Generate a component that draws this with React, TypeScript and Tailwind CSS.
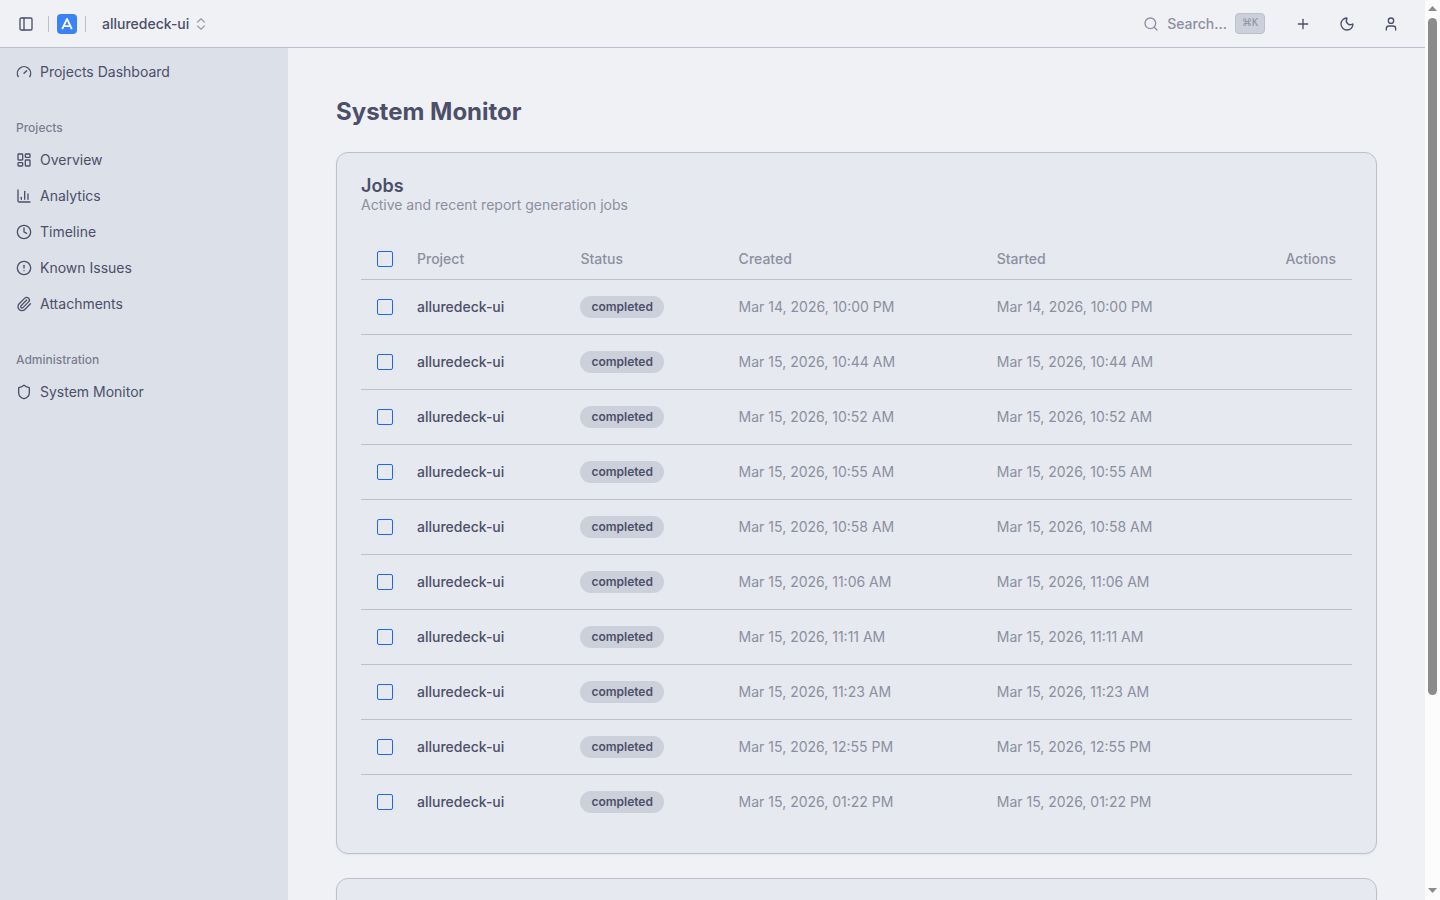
import {
  ChartColumn,
  ChevronsUpDown,
  CircleAlert,
  Clock,
  Gauge,
  LayoutDashboard,
  Moon,
  PanelLeft,
  Paperclip,
  Plus,
  Search,
  Shield,
  User,
  type LucideIcon,
} from "lucide-react";

type NavItem = { label: string; icon: LucideIcon };

const projectItems: NavItem[] = [
  { label: "Overview", icon: LayoutDashboard },
  { label: "Analytics", icon: ChartColumn },
  { label: "Timeline", icon: Clock },
  { label: "Known Issues", icon: CircleAlert },
  { label: "Attachments", icon: Paperclip },
];

const adminItems: NavItem[] = [{ label: "System Monitor", icon: Shield }];

const jobs = [
  "Mar 14, 2026, 10:00 PM",
  "Mar 15, 2026, 10:44 AM",
  "Mar 15, 2026, 10:52 AM",
  "Mar 15, 2026, 10:55 AM",
  "Mar 15, 2026, 10:58 AM",
  "Mar 15, 2026, 11:06 AM",
  "Mar 15, 2026, 11:11 AM",
  "Mar 15, 2026, 11:23 AM",
  "Mar 15, 2026, 12:55 PM",
  "Mar 15, 2026, 01:22 PM",
].map((time, index) => ({
  id: index + 1,
  project: "alluredeck-ui",
  status: "completed",
  created: time,
  started: time,
}));

function Logo() {
  return (
    <svg viewBox="0 0 20 20" className="size-5" aria-hidden="true">
      <rect width="20" height="20" rx="4" fill="#3b82f6" />
      <path
        d="M5.2 15 10 4.9 14.8 15M7 12.1h6"
        fill="none"
        stroke="#fff"
        strokeWidth="1.8"
        strokeLinejoin="round"
      />
    </svg>
  );
}

function NavLink({ label, icon: Icon }: NavItem) {
  return (
    <a href="#" className="flex h-8 items-center gap-2 rounded-md px-2 text-sm hover:bg-[#ccd0da]">
      <Icon className="size-4 shrink-0" />
      <span>{label}</span>
    </a>
  );
}

function NavGroup({ title, items }: { title?: string; items: NavItem[] }) {
  return (
    <div className="p-2">
      {title && (
        <h2 className="flex h-8 items-center px-2 text-xs font-medium text-[#4c4f69]/70">{title}</h2>
      )}
      <ul className="flex flex-col gap-1">
        {items.map((item) => (
          <li key={item.label}>
            <NavLink {...item} />
          </li>
        ))}
      </ul>
    </div>
  );
}

function IconButton({ label, icon: Icon }: NavItem) {
  return (
    <button
      type="button"
      aria-label={label}
      className="flex size-9 items-center justify-center rounded-md hover:bg-[#ccd0da]"
    >
      <Icon className="size-4" />
    </button>
  );
}

function Checkbox({ label }: { label: string }) {
  return (
    <input
      type="checkbox"
      aria-label={label}
      className="block size-4 appearance-none rounded-[2px] border border-[#1e66f5] checked:bg-[#1e66f5]"
    />
  );
}

function Header() {
  return (
    <header className="sticky top-0 z-10 flex h-12 items-center justify-between border-b border-[#bcc0cc] bg-[#eff1f5] pr-4 pl-3">
      <div className="flex items-center gap-2">
        <button
          type="button"
          aria-label="Toggle sidebar"
          className="flex size-7 items-center justify-center rounded-md hover:bg-[#ccd0da]"
        >
          <PanelLeft className="size-4" />
        </button>
        <span className="h-4 w-px bg-[#bcc0cc]" />
        <a href="#" aria-label="Home">
          <Logo />
        </a>
        <span className="h-4 w-px bg-[#bcc0cc]" />
        <button
          type="button"
          className="flex h-8 items-center gap-1 rounded-md px-2 text-sm font-medium hover:bg-[#ccd0da]"
        >
          alluredeck-ui
          <ChevronsUpDown className="size-4 opacity-50" />
        </button>
      </div>
      <div className="flex items-center gap-2">
        <button
          type="button"
          className="flex h-9 items-center gap-2 rounded-md px-3 text-sm font-medium text-[#8c8fa1] hover:bg-[#ccd0da]"
        >
          <Search className="size-4" />
          Search...
          <kbd className="flex rounded-sm border border-[#bcc0cc] bg-[#ccd0da] px-1.5 pt-0.5 pb-[3px] text-[10px] leading-3.5 font-normal">
            <span className="font-['DejaVu_Sans',sans-serif]">⌘</span>
            <span className="font-['DejaVu_Sans_Mono',monospace]">K</span>
          </kbd>
        </button>
        <IconButton label="Add" icon={Plus} />
        <IconButton label="Toggle theme" icon={Moon} />
        <IconButton label="Account" icon={User} />
      </div>
    </header>
  );
}

function JobsTable() {
  return (
    <table className="w-full text-sm">
      <thead>
        <tr className="h-10 border-b border-[#bcc0cc] text-left text-[#8c8fa1]">
          <th className="w-10 pl-4">
            <Checkbox label="Select all jobs" />
          </th>
          <th className="px-4 font-medium">Project</th>
          <th className="px-4 font-medium">Status</th>
          <th className="px-4 font-medium">Created</th>
          <th className="px-4 font-medium">Started</th>
          <th className="px-4 text-right font-medium">Actions</th>
        </tr>
      </thead>
      <tbody>
        {jobs.map((job) => (
          <tr key={job.id} className="border-b border-[#bcc0cc] last:border-b-0">
            <td className="py-4 pl-4">
              <Checkbox label={`Select job ${job.id}`} />
            </td>
            <td className="p-4 font-medium whitespace-nowrap">{job.project}</td>
            <td className="p-4">
              <span className="flex w-fit rounded-full border border-transparent bg-[#ccd0da] bg-origin-border px-2.5 py-0.5 text-xs font-semibold">
                {job.status}
              </span>
            </td>
            <td className="p-4 whitespace-nowrap text-[#8c8fa1]">{job.created}</td>
            <td className="p-4 whitespace-nowrap text-[#8c8fa1]">{job.started}</td>
            <td className="p-4" />
          </tr>
        ))}
      </tbody>
    </table>
  );
}

function ScrollRail() {
  return (
    <div
      aria-hidden="true"
      className="sticky top-0 flex h-screen w-[15px] shrink-0 flex-col items-center bg-[#fcfcfc] pt-1.5 pb-[7px]"
    >
      <svg viewBox="0 0 9 5" className="mb-[7px] h-[5px] w-[9px] shrink-0" fill="#8b8b8b">
        <path d="M0 5 4.5 0 9 5Z" />
      </svg>
      <div className="flex w-[9px] flex-1 flex-col">
        <div className="h-[78.4%] rounded-full bg-[#8b8b8b]" />
      </div>
      <svg viewBox="0 0 9 5" className="mt-[7px] h-[5px] w-[9px] shrink-0" fill="#8b8b8b">
        <path d="M0 0 4.5 5 9 0Z" />
      </svg>
    </div>
  );
}

export default function App() {
  return (
    <div className="flex items-start bg-[#fcfcfc] font-[Inter,sans-serif] text-[#4c4f69]">
      <div className="min-h-screen min-w-0 flex-1 bg-[#eff1f5]">
        <Header />
        <div className="flex items-stretch">
          <aside className="w-72 shrink-0 bg-[#dce0e8]">
            <nav className="sticky top-12 flex flex-col gap-2">
              <NavGroup items={[{ label: "Projects Dashboard", icon: Gauge }]} />
              <NavGroup title="Projects" items={projectItems} />
              <NavGroup title="Administration" items={adminItems} />
            </nav>
          </aside>
          <main className="flex min-w-0 flex-1 flex-col gap-6 p-12">
            <h1 className="text-2xl font-bold">System Monitor</h1>
            <section className="rounded-xl border border-[#bcc0cc] bg-[#e6e9ef] p-6 shadow-xs">
              <h2 className="text-lg leading-none font-semibold">Jobs</h2>
              <p className="mb-6 text-sm text-[#8c8fa1]">Active and recent report generation jobs</p>
              <JobsTable />
            </section>
            <section className="min-h-58 rounded-xl border border-[#bcc0cc] bg-[#e6e9ef] p-6 shadow-xs" />
          </main>
        </div>
      </div>
      <ScrollRail />
    </div>
  );
}
